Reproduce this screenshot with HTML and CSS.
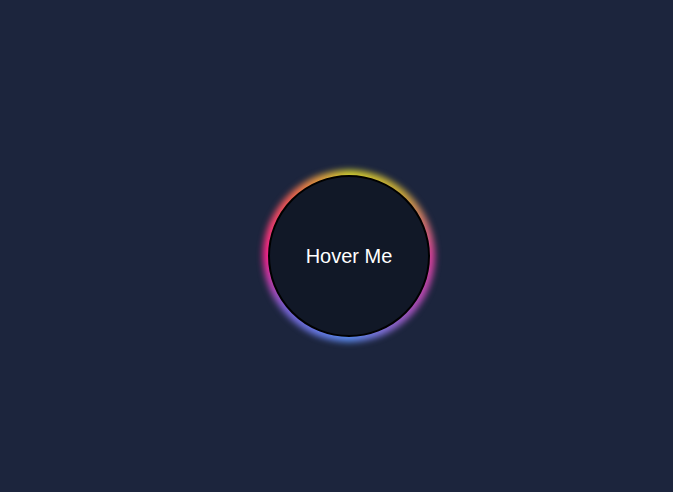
FILE: index.html
```html
<!DOCTYPE html>
<html>
<head>
<meta charset="utf-8">
<link rel="stylesheet" href="styles.css">
</head>
<body>
<main class="stage">
  <button class="glow-btn"><span class="label">Hover Me</span></button>
</main>
</body>
</html>
```
FILE: styles.css
```css
html, body {
  margin: 0;
  height: 100%;
  background: #1c253d;
}
.stage {
  box-sizing: border-box;
  height: 100%;
  display: flex;
  align-items: center;
  justify-content: center;
  padding: 20px 0 0 25px;
}
.glow-btn {
  position: relative;
  isolation: isolate;
  width: 162px;
  height: 162px;
  border-radius: 50%;
  border: 2px solid #000;
  background: #111827;
  color: #fff;
  font-family: "Liberation Sans", Arial, sans-serif;
  font-size: 20px;
  padding: 0;
  cursor: pointer;
}
.glow-btn::before {
  content: "";
  position: absolute;
  inset: -7px;
  border-radius: 50%;
  background: conic-gradient(from 0deg, #d4d030 0deg, #c8a838 40deg, #d8409a 90deg, #b04cb8 125deg, #5a8cf0 180deg, #7a64d8 230deg, #ff2290 270deg, #f06050 315deg, #d4d030 360deg);
  filter: blur(3px);
  z-index: -1;
}
.glow-btn::after {
  content: "";
  position: absolute;
  inset: -2px;
  border-radius: 50%;
  border: 2px solid #000;
  background: #111827;
  z-index: -1;
}
.label {
  position: relative;
}
```
